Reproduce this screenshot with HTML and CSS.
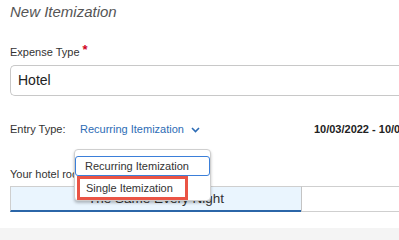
FILE: index.html
```html
<!DOCTYPE html>
<html>
<head>
<meta charset="utf-8">
<link rel="stylesheet" href="styles.css">
</head>
<body>
<div class="page">
  <h1 class="title">New Itemization</h1>
  <div class="label exp-label">Expense Type <span class="req">*</span></div>
  <div class="input">Hotel</div>
  <div class="entry-row">
    <span class="entry-label">Entry Type:</span>
    <span class="entry-link">Recurring Itemization
      <svg class="chev" width="9" height="6" viewBox="0 0 9 6"><polyline points="1,1 4.5,4.5 8,1" fill="none" stroke="#2d6cb5" stroke-width="1.6"/></svg>
    </span>
    <span class="dates">10/03/2022 - 10/05/2022</span>
    <div class="menu">
      <div class="opt opt-active">Recurring Itemization</div>
      <div class="opt opt-marked">Single Itemization</div>
    </div>
  </div>
  <div class="label hotel-label">Your hotel room rate is:</div>
  <div class="segments">
    <div class="seg seg-on">The Same Every Night</div>
    <div class="seg seg-off"></div>
  </div>
</div>
<div class="footer"></div>
</body>
</html>
```
FILE: styles.css
```css
html, body {
  margin: 0;
  padding: 0;
  background: #fff;
  overflow: hidden;
}
body {
  width: 399px;
  height: 240px;
  font-family: "Liberation Sans", Arial, sans-serif;
  color: #333;
}
.page {
  padding-left: 10px;
  height: 228px;
  overflow: hidden;
  position: relative;
}
.title {
  margin: 0;
  padding-top: 2px;
  font-size: 15px;
  line-height: 20px;
  font-weight: normal;
  font-style: italic;
  color: #555;
}
.label {
  font-size: 11px;
  line-height: 14px;
  color: #333;
  white-space: nowrap;
}
.exp-label {
  margin-top: 23px;
}
.req {
  color: #d0021b;
  font-size: 13px;
  font-weight: bold;
  line-height: 10px;
  vertical-align: 2px;
}
.input {
  margin-top: 6px;
  height: 29px;
  border: 1px solid #c8c8c8;
  border-right: none;
  border-radius: 5px 0 0 5px;
  box-sizing: content-box;
  font-size: 14px;
  line-height: 29px;
  padding-left: 7px;
  color: #222;
}
.entry-row {
  position: relative;
  margin-top: 26px;
  display: flex;
  align-items: center;
  height: 14px;
  font-size: 11px;
  line-height: 14px;
  white-space: nowrap;
}
.entry-label {
  flex: none;
  width: 70px;
  color: #333;
}
.entry-link {
  flex: none;
  color: #2d6cb5;
  display: flex;
  align-items: center;
  gap: 7px;
}
.chev {
  margin-top: 1px;
}
.dates {
  flex: none;
  margin-left: 114px;
  font-weight: bold;
  color: #222;
}
.menu {
  position: absolute;
  left: 64px;
  top: 27px;
  width: 135px;
  background: #fff;
  border: 1px solid #cfcfcf;
  border-radius: 4px;
  box-shadow: 0 2px 3px rgba(0,0,0,0.25);
  z-index: 2;
  padding-top: 6px;
  box-sizing: content-box;
}
.opt {
  font-size: 11px;
  line-height: 18px;
  height: 18px;
  padding-left: 9px;
  color: #333;
}
.opt-active {
  border: 1px solid #3b7fd9;
  border-radius: 3px;
}
.opt-marked {
  margin: 0 22px 0 2px;
  padding-left: 6px;
  border: 3px solid #ea5445;
}
.hotel-label {
  margin-top: 31px;
}
.segments {
  margin-top: 5px;
  display: flex;
  height: 26px;
}
.seg {
  box-sizing: border-box;
  height: 26px;
  border-top: 1px solid #cfcfcf;
  border-bottom: 1px solid #cfcfcf;
}
.seg-on {
  width: 291px;
  flex: none;
  background: #eaf5fe;
  border-left: 1px solid #cfcfcf;
  border-bottom: 2px solid #2b66a8;
  font-size: 13.5px;
  line-height: 24px;
  text-align: center;
  color: #333;
}
.seg-off {
  flex: 1;
  border-left: 1px solid #c4c4c4;
  background: #fff;
}
.footer {
  height: 12px;
  background: #f4f4f4;
}
```
